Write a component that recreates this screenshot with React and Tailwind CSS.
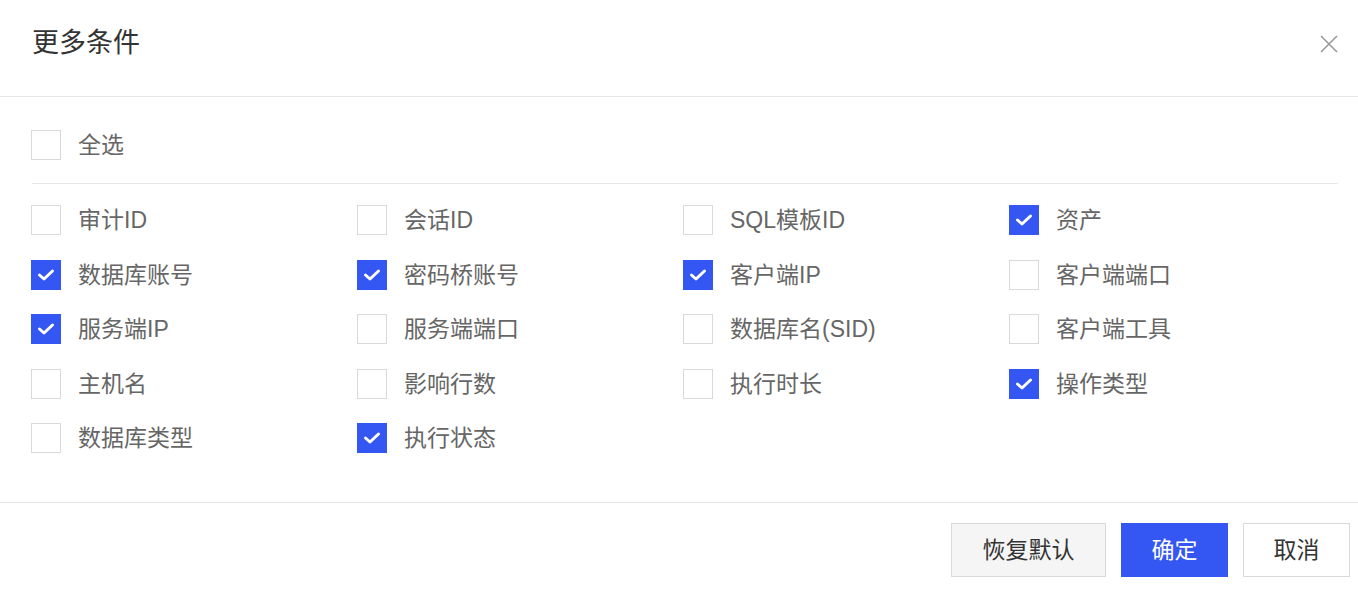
const FIELDS = [
  { label: '审计ID', checked: false },
  { label: '会话ID', checked: false },
  { label: 'SQL模板ID', checked: false },
  { label: '资产', checked: true },
  { label: '数据库账号', checked: true },
  { label: '密码桥账号', checked: true },
  { label: '客户端IP', checked: true },
  { label: '客户端端口', checked: false },
  { label: '服务端IP', checked: true },
  { label: '服务端端口', checked: false },
  { label: '数据库名(SID)', checked: false },
  { label: '客户端工具', checked: false },
  { label: '主机名', checked: false },
  { label: '影响行数', checked: false },
  { label: '执行时长', checked: false },
  { label: '操作类型', checked: true },
  { label: '数据库类型', checked: false },
  { label: '执行状态', checked: true },
]

export default function App() {
  return (
    <div
      className="w-[1358px] h-[590px] bg-white flex flex-col overflow-hidden"
      style={{ fontFamily: '"Liberation Sans", "Noto Sans CJK SC", sans-serif' }}
    >
      <header className="h-[97px] shrink-0 border-b border-[#e6e6e6] flex items-start justify-between pl-[32px] pr-[18px] pt-[27px]">
        <h1 className="text-[27px] leading-[32px] text-[#333]">更多条件</h1>
        <button className="w-[22px] h-[22px] mt-[6px] text-[#999] flex items-center justify-center">
          <svg width="20" height="20" viewBox="0 0 20 20" fill="none" stroke="currentColor" strokeWidth="1.6">
            <path d="M2 2 L18 18 M18 2 L2 18" />
          </svg>
        </button>
      </header>

      <section className="pl-[31px] pr-[20px] pt-[33px] pb-[49px] border-b border-[#e6e6e6]">
        <Option label="全选" checked={false} />
        <div className="h-px bg-[#e6e6e6] mt-[23px] mb-[21px] ml-px" />
        <div className="grid grid-cols-[326px_326px_326px_1fr] gap-y-[24.5px]">
          {FIELDS.map(f => (
            <Option key={f.label} label={f.label} checked={f.checked} />
          ))}
        </div>
      </section>

      <footer className="flex justify-end gap-[15px] pt-[20px] pr-[8px]">
        <Button className="w-[155px] bg-[#f5f5f5] border-[#d9d9d9] text-[#333]">恢复默认</Button>
        <Button className="w-[107px] bg-[#3456f3] border-[#3456f3] text-white">确定</Button>
        <Button className="w-[107px] bg-white border-[#d9d9d9] text-[#333]">取消</Button>
      </footer>
    </div>
  )
}

function Option({ label, checked }) {
  return (
    <label className="flex items-center h-[30px]">
      <span
        className={`w-[30px] h-[30px] shrink-0 flex items-center justify-center border ${
          checked ? 'bg-[#3456f3] border-[#3456f3]' : 'bg-white border-[#d9d9d9]'
        }`}
      >
        {checked && (
          <svg width="18" height="14" viewBox="0 0 18 14" fill="none" stroke="white" strokeWidth="3" strokeLinecap="round" strokeLinejoin="round">
            <path d="M2.5 7 L7 11 L15.5 3" />
          </svg>
        )}
      </span>
      <span className="ml-[17px] text-[23px] leading-[30px] text-[#666] whitespace-nowrap">{label}</span>
    </label>
  )
}

function Button({ className = '', children }) {
  return (
    <button className={`h-[54px] border text-[23px] flex items-center justify-center ${className}`}>
      {children}
    </button>
  )
}
